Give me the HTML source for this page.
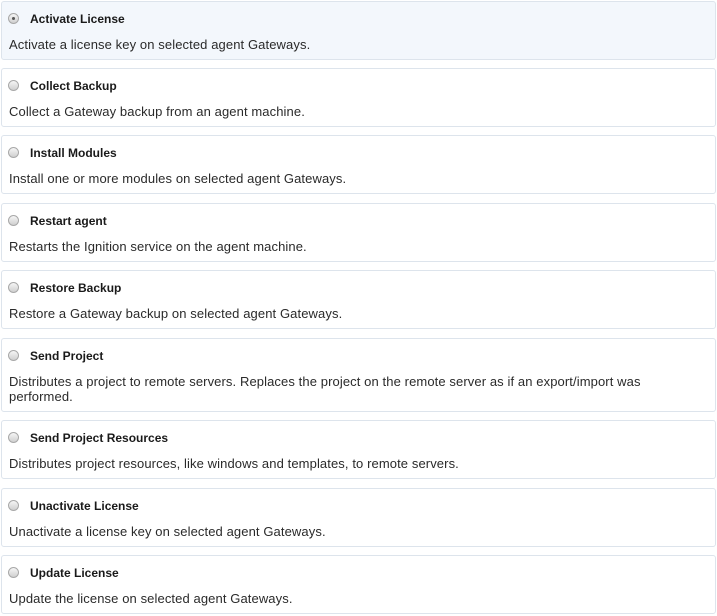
<html><head><style>
body{margin:0;background:#fff;font-family:"Liberation Sans",sans-serif;color:#222;}
.c{position:absolute;left:1px;width:715px;border:1px solid #dde4ec;border-radius:3px;background:#fff;box-sizing:border-box}
.c.s{background:#f3f7fc}
.r{position:absolute;left:6px;top:11px;width:11px;height:11px;border-radius:50%;background:linear-gradient(#f6f6f6,#cfcfcf);border:1px solid #a8a8a8;box-sizing:border-box}
.s .r::after{content:"";position:absolute;left:3px;top:3px;width:3px;height:3px;border-radius:50%;background:#555}
.t{position:absolute;left:28px;top:10px;font-weight:bold;font-size:12px;color:#1a1a1a}
.d{position:absolute;left:7px;top:35px;font-size:13px;line-height:15px;color:#2a2a2a;right:40px;letter-spacing:0.1px}
</style></head><body>
<div class="c s" style="top:1px;height:59px"><div class="r"></div><div class="t">Activate License</div><div class="d">Activate a license key on selected agent Gateways.</div></div>
<div class="c" style="top:68px;height:59px"><div class="r"></div><div class="t">Collect Backup</div><div class="d">Collect a Gateway backup from an agent machine.</div></div>
<div class="c" style="top:135px;height:59px"><div class="r"></div><div class="t">Install Modules</div><div class="d">Install one or more modules on selected agent Gateways.</div></div>
<div class="c" style="top:203px;height:59px"><div class="r"></div><div class="t">Restart agent</div><div class="d">Restarts the Ignition service on the agent machine.</div></div>
<div class="c" style="top:270px;height:59px"><div class="r"></div><div class="t">Restore Backup</div><div class="d">Restore a Gateway backup on selected agent Gateways.</div></div>
<div class="c" style="top:338px;height:74px"><div class="r"></div><div class="t">Send Project</div><div class="d">Distributes a project to remote servers. Replaces the project on the remote server as if an export/import was performed.</div></div>
<div class="c" style="top:420px;height:59px"><div class="r"></div><div class="t">Send Project Resources</div><div class="d">Distributes project resources, like windows and templates, to remote servers.</div></div>
<div class="c" style="top:488px;height:59px"><div class="r"></div><div class="t">Unactivate License</div><div class="d">Unactivate a license key on selected agent Gateways.</div></div>
<div class="c" style="top:555px;height:59px"><div class="r"></div><div class="t">Update License</div><div class="d">Update the license on selected agent Gateways.</div></div>
</body></html>
